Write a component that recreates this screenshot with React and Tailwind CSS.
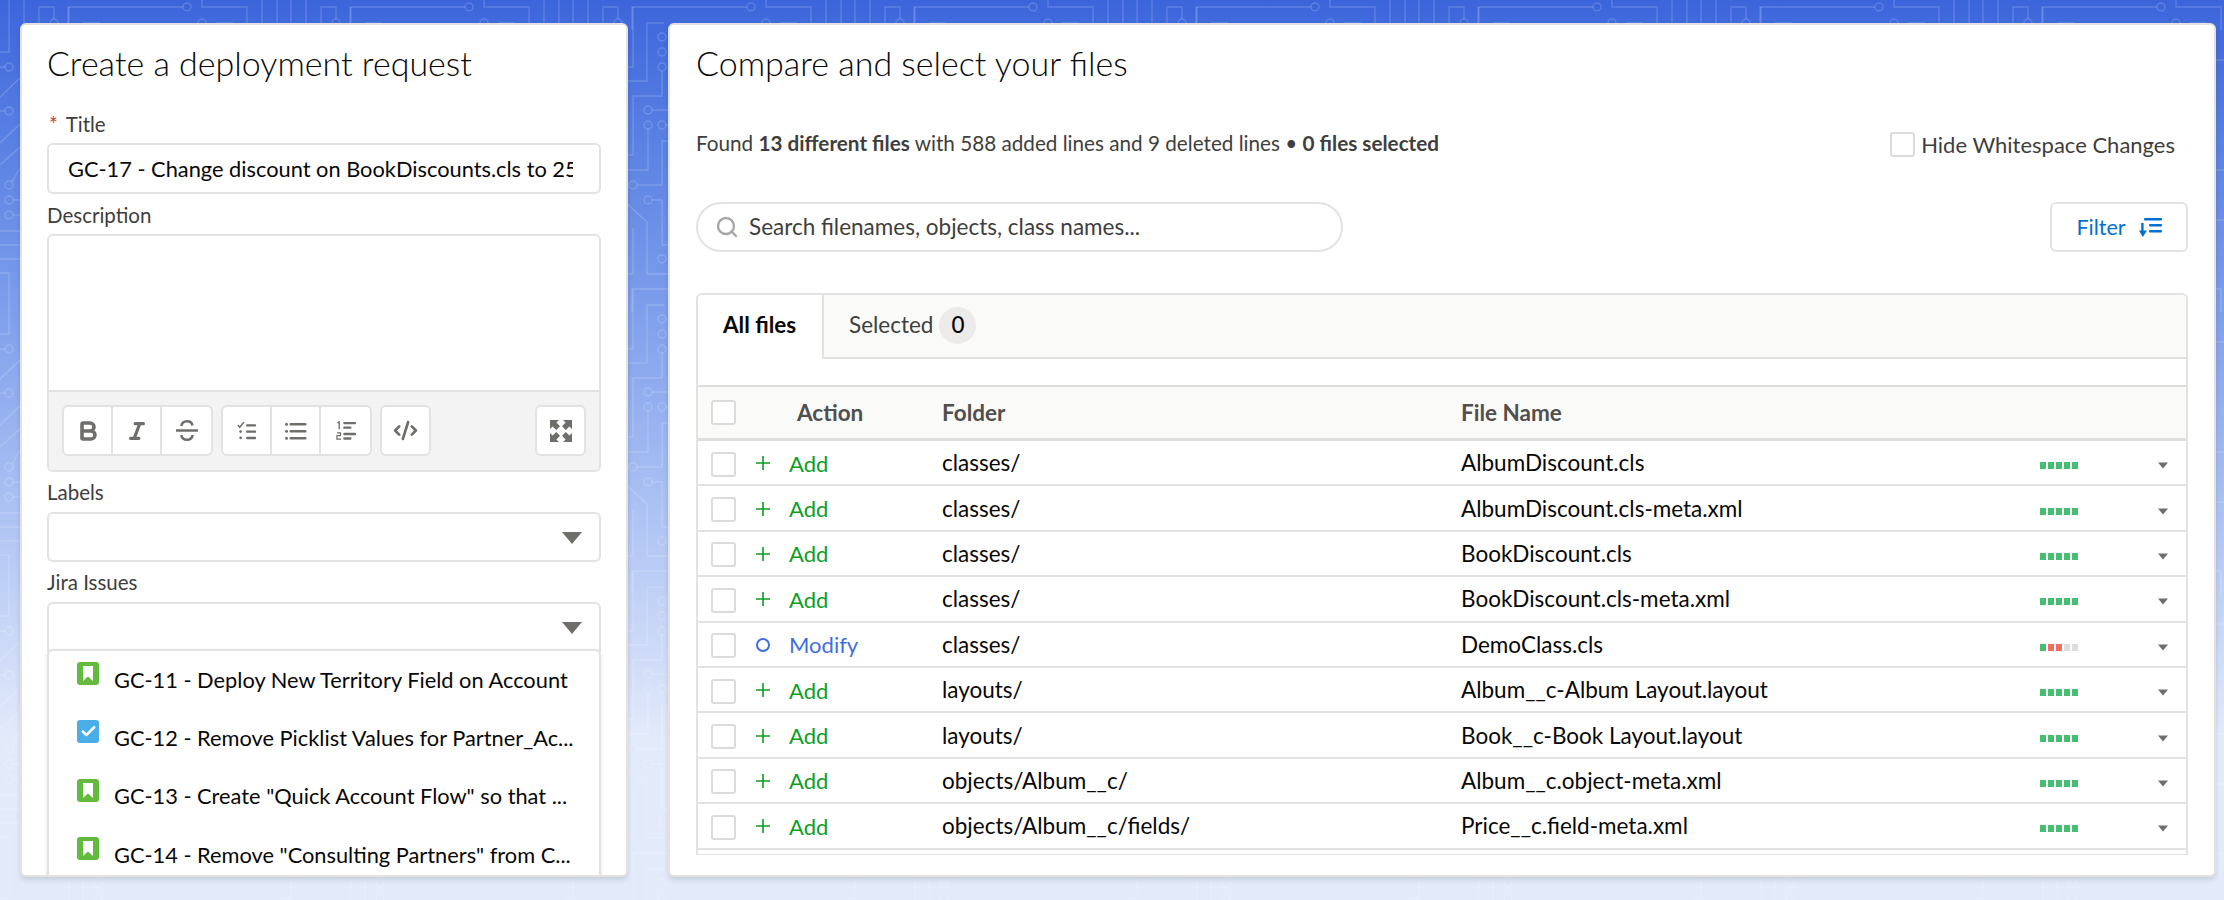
import { Bold, Italic, CodeXml, Search, Check } from 'lucide-react'

const files = [
  { action: 'Add', folder: 'classes/', name: 'AlbumDiscount.cls', bars: 'ggggg' },
  { action: 'Add', folder: 'classes/', name: 'AlbumDiscount.cls-meta.xml', bars: 'ggggg' },
  { action: 'Add', folder: 'classes/', name: 'BookDiscount.cls', bars: 'ggggg' },
  { action: 'Add', folder: 'classes/', name: 'BookDiscount.cls-meta.xml', bars: 'ggggg' },
  { action: 'Modify', folder: 'classes/', name: 'DemoClass.cls', bars: 'grrxx' },
  { action: 'Add', folder: 'layouts/', name: 'Album__c-Album Layout.layout', bars: 'ggggg' },
  { action: 'Add', folder: 'layouts/', name: 'Book__c-Book Layout.layout', bars: 'ggggg' },
  { action: 'Add', folder: 'objects/Album__c/', name: 'Album__c.object-meta.xml', bars: 'ggggg' },
  { action: 'Add', folder: 'objects/Album__c/fields/', name: 'Price__c.field-meta.xml', bars: 'ggggg' },
]

const issues = [
  { text: 'GC-11 - Deploy New Territory Field on Account', type: 'story' },
  { text: 'GC-12 - Remove Picklist Values for Partner_Ac...', type: 'task' },
  { text: 'GC-13 - Create "Quick Account Flow" so that ...', type: 'story' },
  { text: 'GC-14 - Remove "Consulting Partners" from C...', type: 'story' },
]

const barColors = { g: 'bg-[#45bd72]', r: 'bg-[#f26d62]', x: 'bg-[#dfdedd]' }

function CircuitBackground() {
  return (
    <svg className="absolute inset-0" width="2224" height="900">
      <defs>
        <pattern id="circuit" width="282" height="282" patternUnits="userSpaceOnUse">
          <g fill="none" stroke="#fff" strokeOpacity="0.16" strokeWidth="1.4">
            <path d="M9 0V52H0M24 0V30M39 30V7H54V19M68 30V7H183M202 0V7H247V30M262 0V30M277 0V30" />
            <path d="M83 23H100M216 23H233M69 7V67H60M83 23V81H60" />
            <path d="M98 71V96H69V155H60M88 110H110M84 129V170H60M102 125H110" />
            <path d="M73 185H98V141H110M88 200H98V245H110M60 201L83 222V274H110M69 228V274H60" />
            <path d="M0 97L20 78M0 143L20 124M0 165L20 147M12 182L20 168M13 200H20M13 215H20M0 231H20M0 245H20M0 259H20M9 282V273H0M5 67H0M5 111H0" />
            <path d="M241 60H250M241 130V170H250M241 220H250" />
            <circle cx="54" cy="23" r="4" />
            <circle cx="187" cy="7" r="4" />
            <circle cx="202" cy="23" r="4" />
            <circle cx="98" cy="37" r="4" />
            <circle cx="98" cy="52" r="4" />
            <circle cx="98" cy="67" r="4" />
            <circle cx="84" cy="110" r="4" />
            <circle cx="84" cy="125" r="4" />
            <circle cx="98" cy="125" r="4" />
            <circle cx="69" cy="185" r="4" />
            <circle cx="84" cy="200" r="4" />
            <circle cx="98" cy="259" r="4" />
            <circle cx="9" cy="67" r="4" />
            <circle cx="9" cy="111" r="4" />
            <circle cx="9" cy="185" r="4" />
            <circle cx="9" cy="200" r="4" />
            <circle cx="9" cy="215" r="4" />
          </g>
        </pattern>
      </defs>
      <rect width="2224" height="900" fill="url(#circuit)" />
    </svg>
  )
}

function Caret({ className }) {
  return (
    <svg className={className} viewBox="0 0 20 12">
      <path d="M0 0H20L10 12Z" fill="#706e6b" />
    </svg>
  )
}

function CheckBox({ className = '' }) {
  return <span className={`block w-[25px] h-[25px] rounded-[3px] border-2 border-[#dddbda] bg-white ${className}`} />
}

function ToolButton({ children, last, single }) {
  return (
    <div className={`h-full flex items-center justify-center text-[#706e6b] ${single ? 'w-[47px]' : 'w-[49px]'} ${last ? '' : 'border-r-2 border-[#e3e2e1]'}`}>
      {children}
    </div>
  )
}

function ToolGroup({ children, className = '' }) {
  return (
    <div className={`h-[51px] flex bg-white border-2 border-[#e3e2e1] rounded-[6px] ${className}`}>{children}</div>
  )
}

function StrikeIcon() {
  return (
    <svg width="22" height="21" viewBox="0 0 22 21" fill="none" stroke="#706e6b" strokeWidth="2.6">
      <path d="M16.5 5.5C16 2.8 13.8 1.3 11 1.3C8 1.3 5.5 3 5.5 6" />
      <path d="M5.5 15C5.5 18 8 19.7 11 19.7C14 19.7 16.5 18 16.5 15" />
      <path d="M0 10.5H22" strokeWidth="2.4" />
    </svg>
  )
}

function CheckListIcon() {
  return (
    <svg width="20" height="19" viewBox="0 0 22 20" fill="#706e6b">
      <path d="M1 4L3 6.5L7.5 1" fill="none" stroke="#706e6b" strokeWidth="1.6" />
      <rect x="10" y="3" width="11" height="2.6" rx="1" />
      <rect x="10" y="10" width="11" height="2.6" rx="1" />
      <rect x="10" y="17" width="11" height="2.6" rx="1" />
      <circle cx="4" cy="11.2" r="1.5" />
      <circle cx="4" cy="18" r="1.5" />
    </svg>
  )
}

function ListIcon() {
  return (
    <svg width="22" height="18" viewBox="0 0 22 18" fill="#706e6b">
      <rect x="4.5" y="1" width="17" height="2.6" rx="1" />
      <rect x="4.5" y="8" width="17" height="2.6" rx="1" />
      <rect x="4.5" y="15" width="17" height="2.6" rx="1" />
      <circle cx="1.5" cy="2.2" r="1.5" />
      <circle cx="1.5" cy="9.2" r="1.5" />
      <circle cx="1.5" cy="16.2" r="1.5" />
    </svg>
  )
}

function OrderedIcon() {
  return (
    <svg width="20" height="20" viewBox="0 0 22 22" fill="#706e6b">
      <path d="M1.5 2L3.5 1V9" fill="none" stroke="#706e6b" strokeWidth="1.5" />
      <path d="M1 13H5V16H1V20H5.5" fill="none" stroke="#706e6b" strokeWidth="1.3" />
      <rect x="8" y="1" width="14" height="2.6" rx="1" />
      <rect x="8" y="6" width="9" height="2.6" rx="1" />
      <rect x="8" y="13" width="14" height="2.6" rx="1" />
      <rect x="8" y="18" width="9" height="2.6" rx="1" />
    </svg>
  )
}

function ExpandIcon() {
  return (
    <svg width="22" height="22" viewBox="0 0 22 22" fill="#706e6b">
      <path d="M0 0H9L6.4 2.6L10 6.2L6.2 10L2.6 6.4L0 9Z" />
      <path d="M22 0H13L15.6 2.6L12 6.2L15.8 10L19.4 6.4L22 9Z" />
      <path d="M0 22H9L6.4 19.4L10 15.8L6.2 12L2.6 15.6L0 13Z" />
      <path d="M22 22H13L15.6 19.4L12 15.8L15.8 12L19.4 15.6L22 13Z" />
    </svg>
  )
}

function FilterIcon() {
  return (
    <svg width="23" height="19" viewBox="0 0 23 19" fill="#0070d2">
      <rect x="5" y="0" width="18" height="2.6" rx="1" />
      <rect x="10" y="6" width="13" height="2.6" rx="1" />
      <rect x="10" y="12" width="13" height="2.6" rx="1" />
      <path d="M4.6 5V12.5H8L3.8 19L0 12.5H2.2V5Z" />
    </svg>
  )
}

function IssueIcon({ type }) {
  if (type === 'task') {
    return (
      <span className="w-[22px] h-[23px] rounded-[3px] bg-[#4bade8] flex items-center justify-center shrink-0">
        <Check size={17} color="#fff" strokeWidth={3.5} />
      </span>
    )
  }
  return (
    <span className="w-[22px] h-[23px] rounded-[3px] bg-[#63ba3c] flex items-center justify-center shrink-0">
      <svg width="12" height="15" viewBox="0 0 12 15">
        <path d="M1 0H11V15L6 10.5L1 15Z" fill="#fff" />
      </svg>
    </span>
  )
}

function FieldLabel({ children, pad = 'pt-[2px]' }) {
  return <div className={`h-[40px] flex items-center text-[#3e3e3c] text-[20.5px] ${pad}`}>{children}</div>
}

function FileRow({ file }) {
  const isAdd = file.action === 'Add'
  return (
    <div className="h-[45.4px] grid grid-cols-[58px_186px_519px_579px_118px_1fr] items-center border-b-2 border-[#e3e2e1] text-[22.5px] text-[#080707]">
      <div className="pl-[13px] mt-[3px]">
        <CheckBox />
      </div>
      <div className={`flex items-center mt-[1px] text-[22px] ${isAdd ? 'text-[#0b9e1f]' : 'text-[#3f6ee0]'}`}>
        <span className="w-[14px] h-[14px] flex items-center justify-center">
          {isAdd ? (
            <svg width="14" height="14" viewBox="0 0 14 14">
              <path d="M7 0V14M0 7H14" stroke="#0b9e1f" strokeWidth="1.6" />
            </svg>
          ) : (
            <span className="w-[14px] h-[14px] shrink-0 rounded-full border-2 border-[#3f6ee0]" />
          )}
        </span>
        <span className="ml-[19px]">{file.action}</span>
      </div>
      <div className="mt-[1px]">{file.folder}</div>
      <div className="mt-[1px]">{file.name}</div>
      <div className="flex gap-[2px] mt-[6px]">
        {[...file.bars].map((b, i) => (
          <span key={i} className={`w-[6px] h-[7px] ${barColors[b]}`} />
        ))}
      </div>
      <div className="mt-[6px]">
        <Caret className="w-[10px] h-[7px]" />
      </div>
    </div>
  )
}

function DeploymentForm() {
  return (
    <div className="w-[608px] h-[854px] shrink-0 bg-white rounded-[6px] border-2 border-[#e3e2e1] overflow-hidden px-[25px] shadow-[0_3px_5px_rgba(0,0,0,0.12)]">
      <h1 className="h-[78px] pb-[3px] flex items-center text-[34px] font-light text-[#080707]">Create a deployment request</h1>
      <FieldLabel>
        <span className="text-[#c23934] mr-[8px] ml-[2px]">*</span>Title
      </FieldLabel>
      <input
        readOnly
        value="GC-17 - Change discount on BookDiscounts.cls to 25%"
        className="w-full h-[51px] pl-[19px] pr-[26px] rounded-[6px] border-2 border-[#e3e2e1] text-[21.8px] text-[#080707] outline-none"
      />
      <FieldLabel>Description</FieldLabel>
      <div className="h-[238px] rounded-[6px] border-2 border-[#e3e2e1] overflow-hidden flex flex-col">
        <div className="h-[156px] bg-white border-b-2 border-[#e3e2e1]" />
        <div className="flex-1 bg-[#f3f3f3] flex items-center px-[13px] pb-[1px]">
          <ToolGroup>
            <ToolButton><Bold size={24} strokeWidth={3.6} /></ToolButton>
            <ToolButton><Italic size={22} strokeWidth={3.4} /></ToolButton>
            <ToolButton last><StrikeIcon /></ToolButton>
          </ToolGroup>
          <ToolGroup className="ml-[8px]">
            <ToolButton><CheckListIcon /></ToolButton>
            <ToolButton><ListIcon /></ToolButton>
            <ToolButton last><OrderedIcon /></ToolButton>
          </ToolGroup>
          <ToolGroup className="ml-[8px]">
            <ToolButton last single><CodeXml size={25} strokeWidth={2.6} /></ToolButton>
          </ToolGroup>
          <ToolGroup className="ml-auto">
            <ToolButton last single><ExpandIcon /></ToolButton>
          </ToolGroup>
        </div>
      </div>
      <FieldLabel pad="">Labels</FieldLabel>
      <div className="h-[50px] rounded-[6px] border-2 border-[#e3e2e1] flex items-center justify-end pr-[17px]">
        <Caret className="w-[20px] h-[12px] mt-[2px]" />
      </div>
      <FieldLabel pad="">Jira Issues</FieldLabel>
      <div className="h-[50px] rounded-t-[6px] border-2 border-[#e3e2e1] flex items-center justify-end pr-[17px]">
        <Caret className="w-[20px] h-[12px] mt-[2px]" />
      </div>
      <div className="-mt-[3px] relative bg-white rounded-[6px] border-2 border-[#e3e2e1] shadow-[0_2px_4px_rgba(0,0,0,0.12)] pl-[28px] pr-[20px] h-[260px]">
        {issues.map((issue) => (
          <div key={issue.text} className="h-[58.3px] flex items-center">
            <span className="self-start mt-[11px]">
              <IssueIcon type={issue.type} />
            </span>
            <span className="ml-[15px] whitespace-nowrap text-[21.8px] text-[#080707]">{issue.text}</span>
          </div>
        ))}
      </div>
    </div>
  )
}

function FileCompare() {
  return (
    <div className="flex-1 h-[854px] bg-white rounded-[6px] border-2 border-[#e3e2e1] overflow-hidden px-[26px] shadow-[0_3px_5px_rgba(0,0,0,0.12)]">
      <h1 className="h-[78px] pb-[3px] flex items-center text-[34px] font-light text-[#080707]">Compare and select your files</h1>
      <div className="h-[82px] flex items-center justify-between text-[20.7px] text-[#3e3e3c]">
        <div>
          Found <b className="font-bold">13 different files</b> with 588 added lines and 9 deleted lines •{' '}
          <b className="font-bold">0 files selected</b>
        </div>
        <div className="flex items-center mr-[13px] text-[22px]">
          <CheckBox className="mr-[6px]" />
          Hide Whitespace Changes
        </div>
      </div>
      <div className="mt-[17px] h-[50px] flex justify-between">
        <div className="w-[647px] rounded-full border-2 border-[#e3e2e1] flex items-center pl-[17px] text-[22.5px] text-[#3e3e3c]">
          <Search size={24} color="#a8a7a5" strokeWidth={2.4} className="mr-[10px]" />
          Search filenames, objects, class names...
        </div>
        <div className="w-[138px] rounded-[6px] border-2 border-[#e3e2e1] flex items-center justify-center gap-[13px] text-[21.5px] text-[#0070d2]">
          Filter
          <FilterIcon />
        </div>
      </div>
      <div className="mt-[41px] h-[562px] rounded-t-[6px] border-2 border-b-0 border-[#e3e2e1] overflow-hidden">
        <div className="h-[64px] flex">
          <div className="w-[124px] h-full bg-white flex items-center pl-[25px] text-[22.5px] font-bold text-[#080707] pb-[4px]">All files</div>
          <div className="flex-1 bg-[#fafaf9] border-l-2 border-b-2 border-[#e3e2e1] flex items-center pl-[25px] pb-[2px] text-[22.5px] text-[#3e3e3c]">
            Selected
            <span className="ml-[6px] w-[37px] h-[37px] rounded-full bg-[#ecebea] flex items-center justify-center text-[#080707] font-medium">0</span>
          </div>
        </div>
        <div className="mt-[26px] h-[56px] bg-[#fafaf9] border-t-2 border-b-[3px] border-[#dfdedd] grid grid-cols-[58px_186px_519px_1fr] items-center text-[22.5px] font-bold text-[#514f4d]">
          <div className="pl-[13px]">
            <CheckBox />
          </div>
          <div className="pl-[41px]">Action</div>
          <div>Folder</div>
          <div>File Name</div>
        </div>
        {files.map((file) => (
          <FileRow key={file.name} file={file} />
        ))}
        <div className="h-[6px] border-b-2 border-[#e3e2e1]" />
      </div>
    </div>
  )
}

export default function App() {
  return (
    <div className="relative w-[2224px] h-[900px] overflow-hidden bg-linear-to-b from-[#3c65db] to-[#e3eafa] to-[82%] font-['Lato',sans-serif]">
      <CircuitBackground />
      <div className="relative flex gap-[40px] pt-[23px] pl-[20px] pr-[8px]">
        <DeploymentForm />
        <FileCompare />
      </div>
    </div>
  )
}
